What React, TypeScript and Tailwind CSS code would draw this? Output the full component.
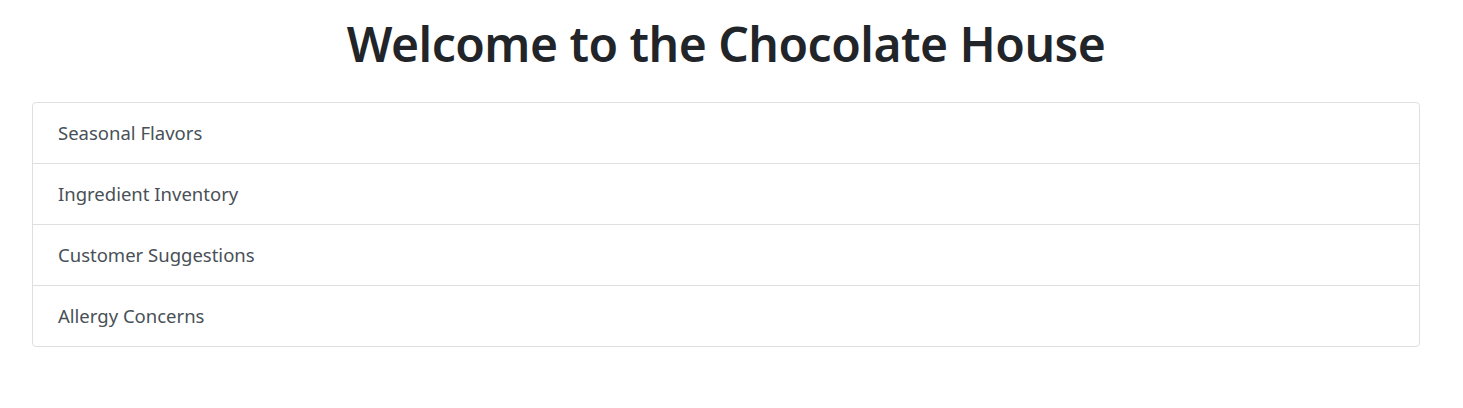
import React from 'react'

const items = ["Seasonal Flavors", "Ingredient Inventory", "Customer Suggestions", "Allergy Concerns"]

const App = () => {
  return (
    <div className="w-full min-h-[408px] bg-white pl-[32px] pr-[43px] pt-[15px] font-['Noto_Sans',sans-serif]">
      <h1 className="text-center text-[48px] leading-[1.2] font-semibold tracking-[-0.5px] text-[#212529] mb-[29px]">
        Welcome to the Chocolate House
      </h1>
      <div className="flex flex-col border border-[#dfdfdf] rounded-[4px]">
        {items.map((item, i) => (
          <div
            key={item}
            className={`px-[25px] py-[15px] text-[18.5px] leading-[30px] text-[#495057] ${i > 0 ? "border-t border-[#dfdfdf]" : ""}`}
          >
            {item}
          </div>
        ))}
      </div>
    </div>
  )
}

export default App
